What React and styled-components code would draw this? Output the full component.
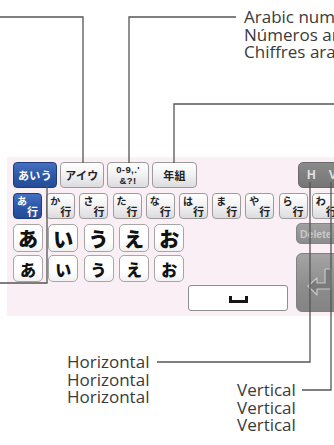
import React from "react";
import styled, { createGlobalStyle, css } from "styled-components";

const Global = createGlobalStyle`
  html, body { margin: 0; padding: 0; background: #fff; }
  body { font-family: "Open Sans", "Lato", sans-serif; }
`;

const Page = styled.div`
  position: relative;
  width: 334px;
  height: 445px;
  overflow: hidden;
  background: #fff;
`;

const TopArea = styled.div`
  height: 157px;
  box-sizing: border-box;
  padding: 8px 0 0 244px;
`;

const Caption = styled.div`
  font-family: "Open Sans", "Lato", sans-serif;
  font-size: 17px;
  line-height: 17.5px;
  color: #3a3a3a;
  white-space: nowrap;
`;

const Panel = styled.div`
  margin-left: 7px;
  width: 345px;
  height: 159px;
  box-sizing: border-box;
  padding: 5px 0 0 6px;
  background: #f9eff4;
  display: flex;
  flex-direction: column;
  font-family: "Noto Sans CJK JP", "Noto Sans", sans-serif;
`;

const Row = styled.div`
  display: flex;
  align-items: flex-start;
  gap: ${(p) => p.$gap || 3}px;
  margin-top: ${(p) => p.$mt || 0}px;
`;

const keyFace = css`
  box-sizing: border-box;
  border: 1px solid #9c9c9c;
  border-radius: 4px;
  background: linear-gradient(#ffffff 0%, #f3f3f4 45%, #dcdcdf 100%);
  color: #222;
`;

const selectedFace = css`
  border: 1px solid #1d3c7c;
  background: linear-gradient(#4670c0 0%, #2e58a8 50%, #244c98 100%);
  color: #fff;
`;

const Tab = styled.div`
  ${keyFace}
  ${(p) => p.$selected && selectedFace}
  width: ${(p) => p.$w}px;
  height: 26px;
  display: flex;
  align-items: center;
  justify-content: center;
  font-size: 11px;
  font-weight: 700;
  line-height: 12px;
  text-align: center;
  letter-spacing: 0.3px;
`;

const SymbolTab = styled(Tab)`
  font-family: "Liberation Sans", "Noto Sans", sans-serif;
  font-size: 9.5px;
  line-height: 11px;
  letter-spacing: 0.4px;
`;

const HVButton = styled.div`
  margin-left: 98px;
  width: 50px;
  height: 26px;
  box-sizing: border-box;
  border-radius: 5px 0 0 5px;
  background: linear-gradient(#8a8a8a, #767676);
  border: 1px solid #6a6a6a;
  display: flex;
  align-items: center;
  gap: 13px;
  padding-left: 8px;
  font-family: "Liberation Sans", "Noto Sans", sans-serif;
  font-size: 12px;
  font-weight: 700;
  color: #e2e2e2;
`;

const GyoKey = styled.div`
  ${keyFace}
  ${(p) => p.$selected && selectedFace}
  width: 29px;
  height: 26px;
  flex: none;
  display: grid;
  grid-template-columns: 1fr 1fr;
  grid-template-rows: 1fr 1fr;
  padding: 2px 2px 2px 3px;
`;

const Kana = styled.span`
  grid-column: 1;
  grid-row: 1;
  font-size: 10px;
  line-height: 10px;
  font-weight: 700;
  white-space: nowrap;
`;

const Gyo = styled.span`
  grid-column: 2;
  grid-row: 2;
  justify-self: end;
  align-self: end;
  font-size: 11px;
  line-height: 11px;
  font-weight: 700;
  margin-right: 1px;
`;

const CharKey = styled.div`
  box-sizing: border-box;
  width: 30px;
  height: ${(p) => p.$h}px;
  flex: none;
  border: 1px solid #a6a6a6;
  border-radius: 5px;
  background: linear-gradient(#ffffff 60%, #f1f1f1 100%);
  display: flex;
  align-items: center;
  justify-content: center;
  font-size: ${(p) => p.$fs}px;
  font-weight: 900;
  color: #111;
`;

const DeleteKey = styled.div`
  margin-left: auto;
  margin-top: -1px;
  width: 56px;
  height: 21px;
  box-sizing: border-box;
  border-radius: 5px 0 0 5px;
  background: linear-gradient(#a0a0a0, #8c8c8c);
  border: 1px solid #858585;
  padding-left: 3px;
  display: flex;
  align-items: center;
  font-family: "Liberation Sans", "Noto Sans", sans-serif;
  font-size: 10.5px;
  font-weight: 700;
  color: #c9c9c9;
`;

const Lower = styled.div`
  display: flex;
  align-items: flex-start;
  margin-top: 3px;
`;

const LeftStack = styled.div`
  display: flex;
  flex-direction: column;
  width: 283px;
`;

const SpaceRow = styled.div`
  display: flex;
  margin-top: 3px;
  padding-left: 175px;
`;

const SpaceKey = styled.div`
  box-sizing: border-box;
  width: 100px;
  height: 26px;
  border: 1px solid #8e8e8e;
  border-radius: 3px;
  background: #fff;
  display: flex;
  align-items: flex-end;
  justify-content: center;
  padding-bottom: 7px;
`;

const SpaceGlyph = styled.span`
  width: 13px;
  height: 4px;
  border: 3px solid #151515;
  border-top: none;
`;

const ReturnKey = styled.div`
  margin-top: -2px;
  width: 56px;
  height: 59px;
  box-sizing: border-box;
  border-radius: 6px 0 0 6px;
  border: 1px solid #808080;
  background: linear-gradient(#a4a4a4 0%, #8c8c8c 60%, #848484 100%);
  display: flex;
  align-items: center;
  padding: 0 0 2px 10px;
`;

const Bottom = styled.div`
  display: grid;
  grid-template-columns: 237px auto;
  align-items: start;
`;

const HLabel = styled(Caption)`
  margin-top: 37px;
  padding-left: 67px;
`;

const VLabel = styled(Caption)`
  margin-top: 65px;
`;

const Overlay = styled.svg`
  position: absolute;
  left: 0;
  top: 0;
  width: 334px;
  height: 445px;
  pointer-events: none;
`;

const gyoList = ["あ", "か", "さ", "た", "な", "は", "ま", "や", "ら", "わ"];
const chars = ["あ", "い", "う", "え", "お"];

export default function App() {
  return (
    <Page>
      <Global />
      <TopArea>
        <Caption>
          Arabic numerals
          <br />
          Números arábigos
          <br />
          Chiffres arabes
        </Caption>
      </TopArea>

      <Panel>
        <Row $gap={3}>
          <Tab $w={44} $selected>あいう</Tab>
          <Tab $w={44}>アイウ</Tab>
          <SymbolTab $w={42}>
            0-9,.'
            <br />
            &amp;?!
          </SymbolTab>
          <Tab $w={45}>年組</Tab>
          <HVButton>
            <span>H</span>
            <span>V</span>
          </HVButton>
        </Row>

        <Row $gap={4.2} $mt={5}>
          {gyoList.map((k, i) => (
            <GyoKey key={k} $selected={i === 0}>
              <Kana>{k}</Kana>
              <Gyo>行</Gyo>
            </GyoKey>
          ))}
        </Row>

        <Row $gap={5.3} $mt={5}>
          {chars.map((c) => (
            <CharKey key={c} $h={28} $fs={20}>
              {c}
            </CharKey>
          ))}
          <DeleteKey>Delete</DeleteKey>
        </Row>

        <Lower>
          <LeftStack>
            <Row $gap={5.3}>
              {chars.map((c) => (
                <CharKey key={c} $h={27} $fs={16}>
                  {c}
                </CharKey>
              ))}
            </Row>
            <SpaceRow>
              <SpaceKey>
                <SpaceGlyph />
              </SpaceKey>
            </SpaceRow>
          </LeftStack>
          <ReturnKey>
            <svg width="26" height="28" viewBox="0 0 26 28">
              <path
                d="M18 1 H24 V21 H10 V27 L1 18 L10 10 V15 H18 Z"
                fill="#7a7a7a"
                stroke="#c8c8c8"
                strokeWidth="1.2"
                strokeLinejoin="round"
              />
            </svg>
          </ReturnKey>
        </Lower>
      </Panel>

      <Bottom>
        <HLabel>
          Horizontal
          <br />
          Horizontal
          <br />
          Horizontal
        </HLabel>
        <VLabel>
          Vertical
          <br />
          Vertical
          <br />
          Vertical
        </VLabel>
      </Bottom>

      <Overlay viewBox="0 0 334 445">
        <g fill="none" stroke="#555" strokeWidth="1.3">
          <path d="M0 17 H83 V163" />
          <path d="M129 163 V17 H236" />
          <path d="M174 163 V104 H334" />
          <path d="M47 185 V283 H0" />
          <path d="M310 182 V362 H157" />
          <path d="M331 182 V390 H302" />
        </g>
      </Overlay>
    </Page>
  );
}
